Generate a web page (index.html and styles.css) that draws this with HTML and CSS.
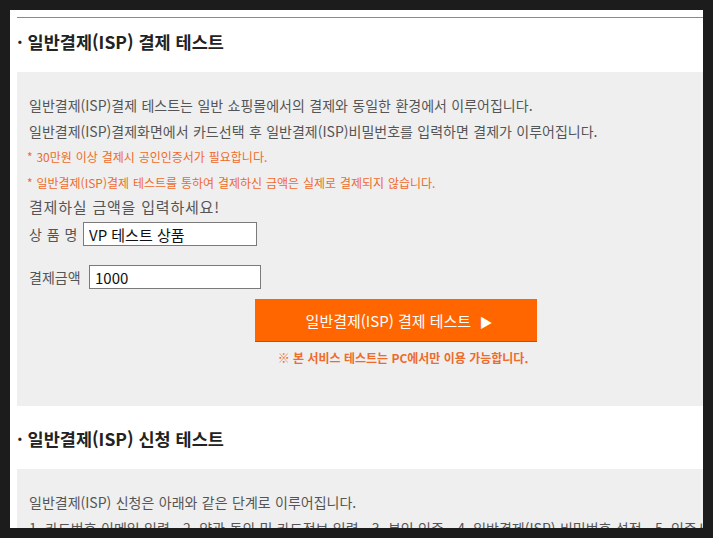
FILE: index.html
```html
<!DOCTYPE html>
<html lang="ko">
<head>
<meta charset="utf-8">
<title>일반결제(ISP) 테스트</title>
<link rel="stylesheet" href="styles.css">
</head>
<body>
<div class="frame">
  <div class="page">
    <section class="section first">
      <h2 class="sec-title">· 일반결제(ISP) 결제 테스트</h2>
      <div class="box">
        <p class="desc">일반결제(ISP)결제 테스트는 일반 쇼핑몰에서의 결제와 동일한 환경에서 이루어집니다.</p>
        <p class="desc">일반결제(ISP)결제화면에서 카드선택 후 일반결제(ISP)비밀번호를 입력하면 결제가 이루어집니다.</p>
        <p class="note">* 30만원 이상 결제시 공인인증서가 필요합니다.</p>
        <p class="note">* 일반결제(ISP)결제 테스트를 통하여 결제하신 금액은 실제로 결제되지 않습니다.</p>
        <p class="prompt">결제하실 금액을 입력하세요!</p>
        <div class="field first-field">
          <label class="label name-label" for="pname">상 품 명</label>
          <input class="input" id="pname" type="text" value="VP 테스트 상품">
        </div>
        <div class="field second-field">
          <label class="label amount-label" for="amount">결제금액</label>
          <input class="input amount" id="amount" type="text" value="1000">
        </div>
        <div class="actions">
          <button class="btn" type="button">일반결제(ISP) 결제 테스트 <span class="arrow">▶</span></button>
          <p class="pc-note">※ 본 서비스 테스트는 PC에서만 이용 가능합니다.</p>
        </div>
      </div>
    </section>
    <section class="section second">
      <h2 class="sec-title">· 일반결제(ISP) 신청 테스트</h2>
      <div class="box">
        <p class="desc">일반결제(ISP) 신청은 아래와 같은 단계로 이루어집니다.</p>
        <p class="desc">1. 카드번호 이메일 입력&nbsp;&nbsp; 2. 약관 동의 및 카드정보 입력&nbsp;&nbsp; 3. 본인 인증&nbsp;&nbsp; 4. 일반결제(ISP) 비밀번호 설정&nbsp;&nbsp; 5. 인증서 저장</p>
      </div>
    </section>
  </div>
</div>
</body>
</html>
```

FILE: styles.css
```css
* { box-sizing: border-box; }
html, body { margin: 0; padding: 0; }
body {
  background: #1c1c1c;
  padding: 10px;
  font-family: "Noto Sans CJK KR", "Noto Sans", sans-serif;
}
.frame {
  width: 693px;
  height: 518px;
  overflow: hidden;
  background: #fff;
}
.page {
  width: 820px;
  padding: 7px 0 0 7px;
}
.section.first {
  border-top: 1px solid #8a8a8a;
}
.section.second {
  margin-top: 9px;
}
.sec-title {
  margin: 0;
  padding: 7px 0 13px 0;
  font-size: 17.5px;
  line-height: 34px;
  font-weight: bold;
  color: #222;
}
.box {
  background: #efefef;
  padding: 20px 12px 38px 12px;
}
.desc {
  margin: 0;
  font-size: 14px;
  line-height: 26px;
  color: #555;
  white-space: nowrap;
  word-spacing: 0.5px;
}
.note {
  margin: 0 0 0 -2px;
  font-size: 12px;
  line-height: 26px;
  color: #ee6b2c;
  white-space: nowrap;
  word-spacing: 0.5px;
}
.prompt {
  margin: 0;
  font-size: 15px;
  line-height: 22px;
  color: #555;
  letter-spacing: 0.8px;
}
.field {
  display: flex;
  align-items: center;
}
.first-field { margin-top: 4px; }
.second-field { margin-top: 19px; }
.label {
  font-size: 14px;
  color: #555;
  white-space: pre;
}
.name-label { width: 54px; word-spacing: 1px; }
.amount-label { width: 60px; }
.input {
  width: 174px;
  height: 24px;
  border: 1px solid #7a7a7a;
  background: #fff;
  padding: 0 5px;
  font-family: "Noto Sans CJK KR", "Noto Sans", sans-serif;
  font-size: 15px;
  color: #111;
  outline: none;
}
.input.amount { width: 172px; }
.actions {
  width: 282px;
  margin: 10px 0 0 226px;
  display: flex;
  flex-direction: column;
  align-items: center;
}
.btn {
  width: 282px;
  height: 43px;
  border: none;
  border-bottom: 1px solid #c84f00;
  background: #ff6600;
  color: #fff;
  font-family: "Noto Sans CJK KR", "Noto Sans", sans-serif;
  font-size: 15px;
  padding: 0 0 0 6px;
  cursor: pointer;
}
.arrow { font-size: 13px; margin-left: 4px; }
.pc-note {
  margin: 6px 0 0 14px;
  font-size: 12px;
  line-height: 20px;
  font-weight: bold;
  color: #ee6b2c;
  white-space: nowrap;
}
```
